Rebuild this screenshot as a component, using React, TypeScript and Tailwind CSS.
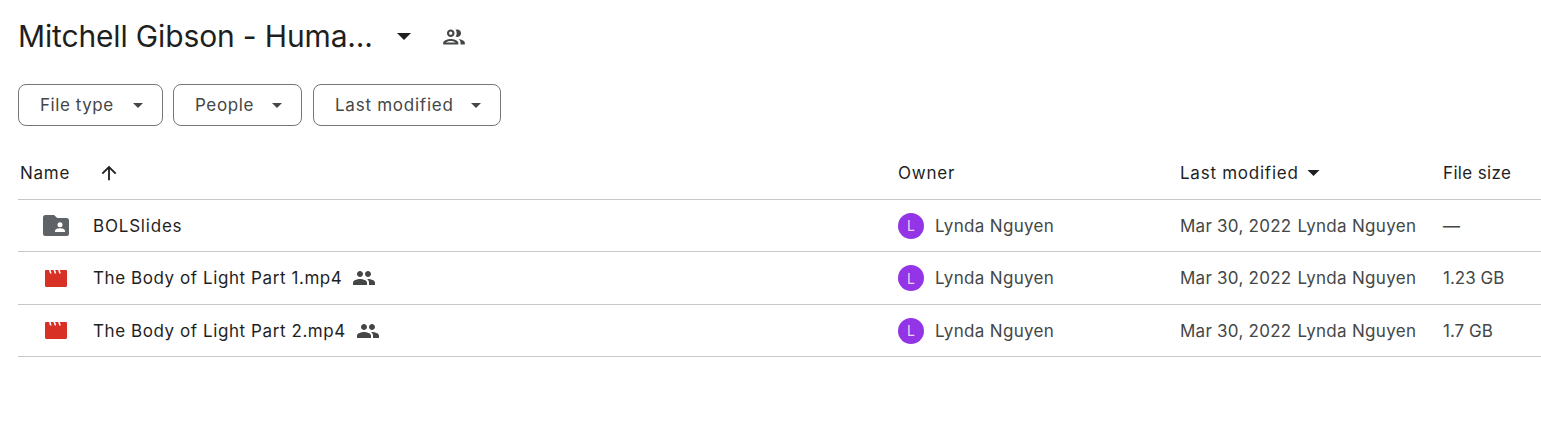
const rows = [
  { name: "BOLSlides", kind: "folder", shared: false, size: "—", height: "h-[52px]", nameTracking: "tracking-[0.8px]" },
  { name: "The Body of Light Part 1.mp4", kind: "video", shared: true, size: "1.23 GB", height: "h-[53px]", nameTracking: "tracking-[0.58px]" },
  { name: "The Body of Light Part 2.mp4", kind: "video", shared: true, size: "1.7 GB", height: "h-[52px]", nameTracking: "tracking-[0.58px]" },
]

function Caret({ className }: { className: string }) {
  return (
    <svg viewBox="0 0 10 5" className={className} fill="currentColor">
      <path d="M0 0l5 5 5-5z" />
    </svg>
  )
}

function Filter({ label, width, tracking }: { label: string; width: string; tracking: string }) {
  return (
    <button className={`${width} h-[42px] flex items-center justify-between pl-[21px] pr-[19px] rounded-lg border border-[#747775] text-[#444746] text-[17px] ${tracking}`}>
      <span className="mt-[2px]">{label}</span>
      <Caret className="w-[10px] h-[5px]" />
    </button>
  )
}

function FolderIcon() {
  return (
    <svg viewBox="0 0 26 21" className="w-[26px] h-[21px] text-[#5f6368]">
      <path
        fill="currentColor"
        d="M2.5 0h8.6l3 3h9.4A2.5 2.5 0 0 1 26 5.5v13a2.5 2.5 0 0 1-2.500 2.500h-21A2.500 2.500 0 0 1 0 18.500v-16A2.500 2.500 0 0 1 2.500 0z"
      />
      <circle cx="17" cy="9.800" r="2.500" fill="#fff" />
      <path fill="#fff" d="M12 17v-1.300c0-1.700 3.300-2.500 5-2.500s5 .8 5 2.500V17z" />
    </svg>
  )
}

function VideoIcon() {
  return (
    <svg viewBox="0 0 22 17" className="w-[22px] h-[17px]">
      <path
        fill="#d93025"
        fillRule="evenodd"
        d="M1 0h20a1 1 0 0 1 1 1v14.500a1.500 1.500 0 0 1-1.500 1.500h-19A1.500 1.500 0 0 1 0 15.500V1a1 1 0 0 1 1-1zM4 0l1 3.500h1.600L5.600 0zM8.600 0l1 3.500h1.600l-1-3.500zM13.200 0l1 3.500h1.600l-1-3.500z"
      />
    </svg>
  )
}

function PeopleFilled() {
  return (
    <svg viewBox="0 0 24 24" className="w-[24px] h-[24px] text-[#444746]" fill="currentColor">
      <path d="M16 11c1.660 0 2.990-1.340 2.990-3S17.660 5 16 5c-1.660 0-3 1.340-3 3s1.340 3 3 3zm-8 0c1.660 0 2.990-1.340 2.990-3S9.660 5 8 5C6.340 5 5 6.340 5 8s1.340 3 3 3zm0 2c-2.330 0-7 1.170-7 3.500V19h14v-2.500c0-2.330-4.670-3.500-7-3.500zm8 0c-.29 0-.62.02-.97.05 1.160.84 1.970 1.970 1.970 3.450V19h6v-2.500c0-2.330-4.670-3.500-7-3.500z" />
    </svg>
  )
}

function Avatar() {
  return (
    <span className="w-[26px] h-[26px] rounded-full bg-[#9334e6] text-[#e9d7fb] text-[14px] flex items-center justify-center">
      L
    </span>
  )
}

function App() {
  return (
    <div className="w-[1541px] h-[442px] bg-white font-['Inter',sans-serif] overflow-hidden pl-[18px]">
      {/* title */}
      <div className="h-[84px] flex items-center pb-[11px]">
        <h1 className="text-[30px] font-normal text-[#1f1f1f] tracking-[-0.15px] w-[378px]">
          Mitchell Gibson - Huma...
        </h1>
        <Caret className="w-[14px] h-[7px] text-[#1f1f1f] ml-[1px]" />
        <svg viewBox="0 0 24 24" className="w-[26px] h-[26px] ml-[30px] text-[#444746]" fill="currentColor">
          <path d="M9 13.750c-2.340 0-7 1.170-7 3.500V19h14v-1.750c0-2.330-4.660-3.500-7-3.500zM4.340 17c.84-.58 2.870-1.250 4.660-1.250s3.820.67 4.660 1.250H4.340zM9 12c1.930 0 3.500-1.570 3.500-3.500S10.930 5 9 5 5.500 6.570 5.500 8.500 7.070 12 9 12zm0-5c.83 0 1.500.67 1.500 1.500S9.830 10 9 10s-1.500-.67-1.500-1.500S8.170 7 9 7zm7.040 6.810c1.160.84 1.960 1.960 1.960 3.440V19h4v-1.750c0-2.020-3.500-3.170-5.960-3.440zM15 12c1.930 0 3.500-1.570 3.500-3.500S16.930 5 15 5c-.54 0-1.040.13-1.500.35.630.89 1 1.980 1 3.150s-.37 2.260-1 3.150c.46.22.96.35 1.500.35z" />
        </svg>
      </div>

      {/* filters */}
      <div className="flex gap-[10px]">
        <Filter label="File type" width="w-[145px]" tracking="tracking-[0.55px]" />
        <Filter label="People" width="w-[129px]" tracking="tracking-[0.6px]" />
        <div className="ml-[1px]">
          <Filter label="Last modified" width="w-[188px]" tracking="tracking-[0.75px]" />
        </div>
      </div>

      {/* table header */}
      <div className="mt-[20px] h-[54px] flex items-center border-b border-[#c7c7c7] text-[17px] text-[#1f1f1f]">
        <div className="w-[880px] flex items-center pl-[2px]">
          <span className="w-[78px] mt-[2px] tracking-[0.75px]">Name</span>
          <svg viewBox="0 0 24 24" className="w-[22px] h-[22px] text-[#1f1f1f]" fill="currentColor">
            <path d="M4 12l1.410 1.410L11 7.830V20h2V7.830l5.580 5.590L20 12l-8-8-8 8z" />
          </svg>
        </div>
        <div className="w-[282px] mt-[2px] tracking-[0.8px]">Owner</div>
        <div className="w-[263px] flex items-center gap-[8px]">
          <span className="mt-[2px] tracking-[0.75px]">Last modified</span>
          <Caret className="w-[13px] h-[6px] text-[#1f1f1f]" />
        </div>
        <div className="mt-[2px] tracking-[0.35px]">File size</div>
      </div>

      {/* rows */}
      {rows.map(row => (
        <div key={row.name} className={`${row.height} flex items-center border-b border-[#c7c7c7] text-[17px] text-[#444746]`}>
          <div className="w-[880px] flex items-center">
            <div className="w-[75px] flex justify-center pl-[1px]">
              {row.kind === "folder" ? <FolderIcon /> : <VideoIcon />}
            </div>
            <span className={`text-[#1f1f1f] mt-[2px] ${row.nameTracking}`}>{row.name}</span>
            {row.shared && <span className="ml-[10px]"><PeopleFilled /></span>}
          </div>
          <div className="w-[282px] flex items-center gap-[11px]">
            <Avatar />
            <span className="mt-[2px] tracking-[0.33px]">Lynda Nguyen</span>
          </div>
          <div className="w-[263px] flex gap-[6px] mt-[2px]">
            <span className="tracking-[0.25px]">Mar 30, 2022</span>
            <span className="tracking-[0.3px]">Lynda Nguyen</span>
          </div>
          <div className="mt-[2px]">{row.size}</div>
        </div>
      ))}
    </div>
  )
}

export default App
